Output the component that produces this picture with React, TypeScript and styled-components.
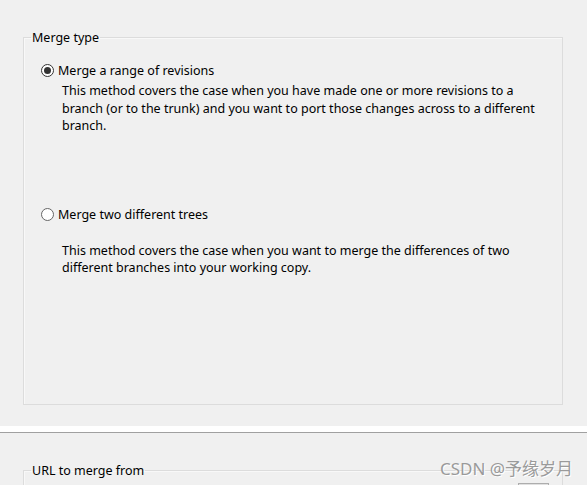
import React from "react";
import styled, { createGlobalStyle } from "styled-components";

const Global = createGlobalStyle`
  html, body { margin: 0; padding: 0; }
  body {
    background: #f0f0f0;
    font-family: "Noto Sans", "Noto Sans CJK SC", sans-serif;
    font-size: 12.5px;
    color: #000;
    width: 587px;
    height: 485px;
    overflow: hidden;
  }
`;

const Page = styled.div`
  position: relative;
  width: 587px;
  height: 485px;
  overflow: hidden;
  display: flex;
  flex-direction: column;
`;

const TopPanel = styled.div`
  flex-shrink: 0;
  height: 426px;
  box-sizing: border-box;
  padding: 29px 0 0 23px;
  background: #f0f0f0;
`;

const Strip = styled.div`
  flex-shrink: 0;
  height: 6px;
  background: #ffffff;
  border-bottom: 1px solid #a0a0a0;
`;

const BottomPanel = styled.div`
  flex-shrink: 0;
  box-sizing: border-box;
  padding: 29px 0 0 23px;
  background: #f0f0f0;
`;

const Group = styled.fieldset<{ $h: number }>`
  margin: 0;
  padding: 0 0 0 17px;
  width: 540px;
  height: ${(p) => p.$h}px;
  box-sizing: border-box;
  border: 1px solid #dcdcdc;
  box-shadow: inset 1px 1px 0 #f8f8f8;
  min-inline-size: 0;
`;

const Legend = styled.legend`
  margin-left: -10px;
  padding: 0 1px;
  line-height: 17px;
  font-size: 12.5px;
`;

const Option = styled.div<{ $top: number }>`
  margin-top: ${(p) => p.$top}px;
`;

const RadioRow = styled.label`
  display: flex;
  align-items: center;
  gap: 4px;
  height: 17px;
  line-height: 17px;
`;

const Radio = styled.span<{ $checked?: boolean }>`
  width: 13px;
  height: 13px;
  box-sizing: border-box;
  border-radius: 50%;
  border: 1px solid ${(p) => (p.$checked ? "#333333" : "#666666")};
  background: #ffffff;
  display: flex;
  align-items: center;
  justify-content: center;
  flex-shrink: 0;
  &::after {
    content: "";
    display: ${(p) => (p.$checked ? "block" : "none")};
    width: 7px;
    height: 7px;
    border-radius: 50%;
    background: #333333;
  }
`;

const Description = styled.p<{ $top: number }>`
  margin: ${(p) => p.$top}px 0 0 21px;
  line-height: 17.5px;
`;

const PartialButton = styled.div`
  margin: 4px 0 0 477px;
  width: 31px;
  height: 20px;
  box-sizing: border-box;
  border: 1px solid #adadad;
  background: #e1e1e1;
`;

const Watermark = styled.div`
  position: absolute;
  left: 440px;
  top: 455px;
  font-family: "Noto Sans", "Noto Sans CJK SC", sans-serif;
  font-size: 17px;
  color: #9a9a9a;
  text-shadow: 1px 1px 0 #ffffff;
  white-space: nowrap;
`;

export default function App() {
  return (
    <Page>
      <Global />
      <TopPanel>
        <Group $h={376}>
          <Legend>Merge type</Legend>
          <Option $top={16}>
            <RadioRow>
              <Radio $checked />
              Merge a range of revisions
            </RadioRow>
            <Description $top={3}>
              This method covers the case when you have made one or more revisions to a
              <br />
              branch (or to the trunk) and you want to port those changes across to a different
              <br />
              branch.
            </Description>
          </Option>
          <Option $top={71}>
            <RadioRow>
              <Radio />
              Merge two different trees
            </RadioRow>
            <Description $top={19}>
              This method covers the case when you want to merge the differences of two
              <br />
              different branches into your working copy.
            </Description>
          </Option>
        </Group>
      </TopPanel>
      <Strip />
      <BottomPanel>
        <Group $h={80}>
          <Legend>URL to merge from</Legend>
          <PartialButton />
        </Group>
      </BottomPanel>
      <Watermark>CSDN @予缘岁月</Watermark>
    </Page>
  );
}
